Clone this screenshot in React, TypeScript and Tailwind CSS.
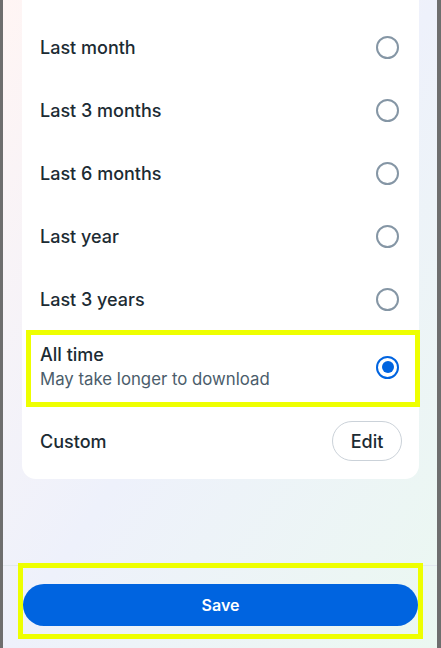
import React from 'react';

const options = ['Last month', 'Last 3 months', 'Last 6 months', 'Last year', 'Last 3 years'];

function Radio({ checked }: { checked?: boolean }) {
  if (checked) {
    return (
      <span className="flex h-[23px] w-[23px] items-center justify-center rounded-full border-[2.5px] border-[#0064e0]">
        <span className="h-[12px] w-[12px] rounded-full bg-[#0064e0]" />
      </span>
    );
  }
  return <span className="h-[23px] w-[23px] rounded-full border-2 border-[#8596a5]" />;
}

export default function App() {
  return (
    <div
      className="flex h-[648px] w-[441px] overflow-hidden bg-[#6e6e6e] px-[3px] pr-[4px]"
      style={{ fontFamily: 'Inter, "Noto Sans", sans-serif' }}
    >
      <div className="relative flex flex-1 flex-col bg-gradient-to-br from-[#fff5f4] via-[#eef1fb] to-[#ebf8f1]">
        {/* card */}
        <div className="ml-[19px] mr-[18px] rounded-b-[14px] bg-white pt-[16px] text-[#1c2b33]">
          {options.map((o) => (
            <div key={o} className="flex h-[63px] items-center justify-between pl-[18px] pr-[20px]">
              <span className="text-[18px] font-medium">{o}</span>
              <Radio />
            </div>
          ))}
          <div className="relative flex h-[72px] items-center justify-between pl-[18px] pr-[20px]">
            <div className="flex flex-col">
              <span className="text-[18px] font-medium leading-[24px]">All time</span>
              <span className="text-[16.8px] leading-[24px] text-[#4b5d6b]">May take longer to download</span>
            </div>
            <Radio checked />
            <div className="pointer-events-none absolute left-[4px] right-[-1px] top-[-1px] bottom-[-4px] border-[5px] border-[#eeff00]" />
          </div>
          <div className="flex h-[76px] items-center justify-between pl-[18px] pr-[17px]">
            <span className="text-[18px] font-medium">Custom</span>
            <button className="flex h-[40px] w-[70px] items-center justify-center rounded-full border border-[#cbd2d9] text-[18px] font-medium text-[#1c2b33]">
              Edit
            </button>
          </div>
        </div>

        <div className="flex-1" />

        {/* footer */}
        <div className="border-t border-[#e2e8ee] pl-[20px] pr-[19px] pb-[22px] pt-[18px]">
          <div className="relative">
            <button className="flex h-[42px] w-full items-center justify-center rounded-full bg-[#0064e0] text-[16px] font-semibold text-white">
              Save
            </button>
            <div className="pointer-events-none absolute left-[-5px] right-[-5px] top-[-21px] bottom-[-13px] border-[5px] border-[#eeff00]" />
          </div>
        </div>
      </div>
    </div>
  );
}
